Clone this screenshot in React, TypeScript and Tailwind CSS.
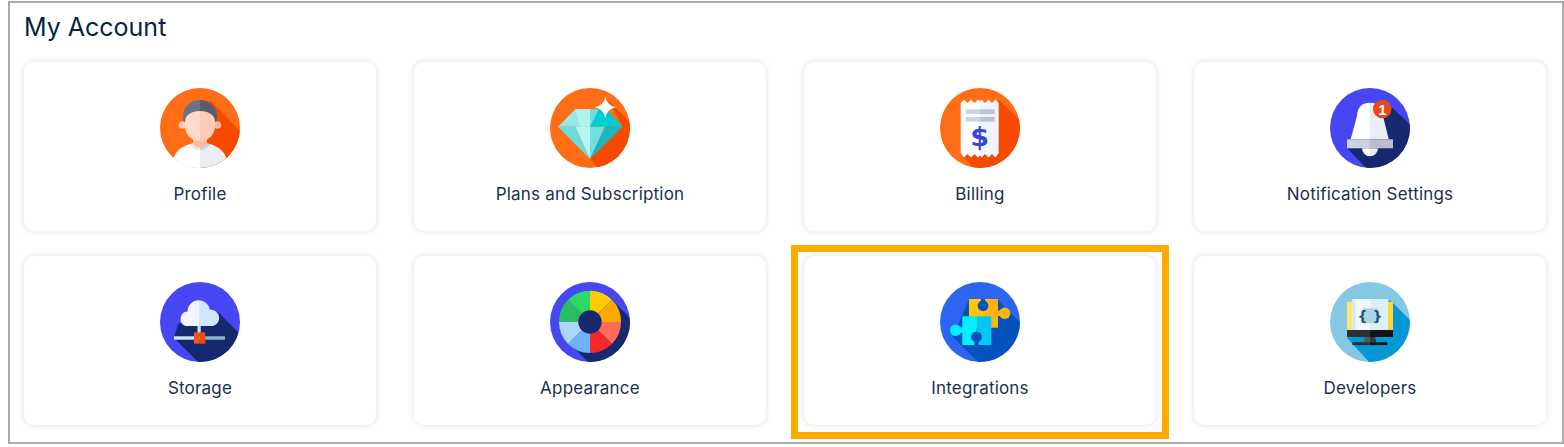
import { ReactNode } from "react";

interface DiscProps {
  id: string;
  bg: string;
  shade: string;
  points: string;
  children: ReactNode;
}

// round flat icon: coloured disc, long shadow, artwork on top
const Disc = ({ id, bg, shade, points, children }: DiscProps) => (
  <svg width="80" height="80" viewBox="0 0 80 80" className="block shrink-0">
    <defs>
      <clipPath id={id}>
        <circle cx="40" cy="40" r="40" />
      </clipPath>
    </defs>
    <g clipPath={`url(#${id})`}>
      <rect width="80" height="80" fill={bg} />
      <polygon points={points} fill={shade} />
      {children}
    </g>
  </svg>
);

const ProfileIcon = () => (
  <Disc id="profile" bg="#FF6D17" shade="#F54A00" points="50,12 82,45 82,82 40,82 40,30">
    <path d="M23 36V29C23 18 31 12 40 12V36Z" fill="#6C7483" />
    <path d="M57 36V29C57 18 49 12 40 12V36Z" fill="#565C6B" />
    <circle cx="22.5" cy="37" r="3.8" fill="#FFC7B6" />
    <circle cx="57.5" cy="37" r="3.8" fill="#FFB7A3" />
    <rect x="33" y="48" width="14" height="16" fill="#FFB8A0" />
    <path d="M40 23C31 23 25 27 25 34V38C25 47 32 53 40 53Z" fill="#FFDACC" />
    <path d="M40 23C49 23 55 27 55 34V38C55 47 48 53 40 53Z" fill="#FFCBB9" />
    <path d="M14 69C17 61 24 58 30 56C33 60 36 62 40 62V82H14Z" fill="#FFFFFF" />
    <path d="M66 69C63 61 56 58 50 56C47 60 44 62 40 62V82H66Z" fill="#E9EDF5" />
    <path d="M30 56C33 60 36 62 40 62V59.5C36 59.5 34 57.5 33 55Z" fill="#E4E8F2" />
    <path d="M50 56C47 60 44 62 40 62V59.5C44 59.5 46 57.5 47 55Z" fill="#CDD3E3" />
    <path d="M14 69L0 80H40V70H14Z" fill="#FFFFFF" />
  </Disc>
);

const PlansIcon = () => (
  <Disc id="plans" bg="#FF6D17" shade="#F54A00" points="58,12 82,36 82,82 50,82 40,71 72.7,38.7">
    <polygon points="25.3,21.3 40,21.3 40,38.7 8,38.7" fill="#97E9E6" />
    <polygon points="25.3,21.3 40,21.3 40,38.7 30,38.7" fill="#B4F2EE" />
    <polygon points="40,21.3 56.3,21.3 72.7,38.7 40,38.7" fill="#00CDD0" />
    <polygon points="40,21.3 49,21.3 40,38.7" fill="#6FE0DC" />
    <polygon points="8,38.7 25.5,38.7 40,71" fill="#6ADCDA" />
    <polygon points="25.5,38.7 40,38.7 40,71" fill="#B6F6F1" />
    <polygon points="40,38.7 55,38.7 40,71" fill="#6FE0DC" />
    <polygon points="55,38.7 72.7,38.7 40,71" fill="#1FB3BE" />
    <path d="M55.3 8.7Q57 17.5 66 19.3Q57 21 55.3 30Q53.5 21 44.7 19.3Q53.5 17.5 55.3 8.7Z" fill="#FFFFFF" />
  </Disc>
);

const BillingIcon = () => (
  <Disc id="billing" bg="#FF6D17" shade="#F54A00" points="58.7,12 82,34 82,82 36,82 20.7,66">
    <polygon points="20.7,15 24,11.5 27.5,15 31,11.5 34.5,15 38,11.5 40,13.5 40,67.5 38,69.5 34.5,66 31,69.5 27.5,66 24,69.5 20.7,65" fill="#FFFFFF" />
    <polygon points="58.7,15 55.5,11.5 52,15 48.5,11.5 45,15 41.5,11.5 40,13.5 40,67.5 41.5,69.5 45,66 48.5,69.5 52,66 55.5,69.5 58.7,65" fill="#F1F4FC" />
    <rect x="25.7" y="21.3" width="14.3" height="4.7" fill="#CDD4E4" />
    <rect x="40" y="21.3" width="14.7" height="4.7" fill="#B9C2D6" />
    <rect x="25.7" y="29" width="14.3" height="4.7" fill="#CDD4E4" />
    <rect x="40" y="29" width="14.7" height="4.7" fill="#B9C2D6" />
    <text x="39.7" y="58" textAnchor="middle" fontSize="27" fontWeight="700" fontFamily="'DejaVu Sans', sans-serif" fill="#3A45D6">$</text>
  </Disc>
);

const BellIcon = () => (
  <Disc id="bell" bg="#4646F2" shade="#16286E" points="56,14 82,38 82,82 38,82 17,60">
    <path d="M40 14.7C31 14.7 27.5 20 27 28L20.7 51.3H40Z" fill="#FFFFFF" />
    <path d="M40 14.7C49 14.7 52.5 20 53 28L58.7 51.3H40Z" fill="#E9EDF5" />
    <path d="M32 60.3A8 8 0 0 0 40 68.3V60.3Z" fill="#FFFFFF" />
    <path d="M48 60.3A8 8 0 0 1 40 68.3V60.3Z" fill="#E9EDF5" />
    <rect x="17" y="51.3" width="23" height="9" fill="#CDD2E0" />
    <rect x="40" y="51.3" width="23" height="9" fill="#B9BDCE" />
    <circle cx="52.3" cy="21" r="9.3" fill="#E8471C" />
    <text x="52.3" y="26.5" textAnchor="middle" fontSize="15" fontWeight="700" fontFamily="'Liberation Sans', sans-serif" fill="#FFFFFF">1</text>
  </Disc>
);

const StorageIcon = () => (
  <Disc id="storage" bg="#4646F2" shade="#16286E" points="58,30 82,54 82,82 40,82 14,56 18,42">
    <path d="M39 18.3A11.5 11.5 0 0 0 27.5 29.5A7.5 7.5 0 0 0 25.5 44H39Z" fill="#F3F5FF" />
    <path d="M39 18.3A11.5 11.5 0 0 1 50 27.8A8.2 8.2 0 0 1 52.5 44H39Z" fill="#D2E7FF" />
    <rect x="37.5" y="44" width="3.2" height="8" fill="#CFE6F9" />
    <rect x="14" y="54.3" width="26" height="3.4" fill="#CFE6F9" />
    <rect x="40" y="54.3" width="25" height="3.4" fill="#8FB5D8" />
    <rect x="34" y="50.3" width="5.7" height="11.4" fill="#F4551B" />
    <rect x="39.7" y="50.3" width="5.6" height="11.4" fill="#E84A14" />
  </Disc>
);

const wheel = [
  { fill: "#FFCC00", d: "M40 40L40 8.7A31 31 0 0 1 61.9 17.8Z" },
  { fill: "#FFA800", d: "M40 40L61.9 17.8A31 31 0 0 1 71 40Z" },
  { fill: "#FF6B57", d: "M40 40L71 40A31 31 0 0 1 61.9 61.9Z" },
  { fill: "#F42A2A", d: "M40 40L61.9 61.9A31 31 0 0 1 40 71Z" },
  { fill: "#6EB1F9", d: "M40 40L40 71A31 31 0 0 1 18.1 61.9Z" },
  { fill: "#ABD4FF", d: "M40 40L18.1 61.9A31 31 0 0 1 9 40Z" },
  { fill: "#28BD60", d: "M40 40L9 40A31 31 0 0 1 18.1 17.8Z" },
  { fill: "#2FD766", d: "M40 40L18.1 17.8A31 31 0 0 1 40 8.7Z" },
];

const AppearanceIcon = () => (
  <Disc id="appearance" bg="#4646F2" shade="#16286E" points="60,16 82,38 82,82 40,82 18,60">
    {wheel.map((s) => (
      <path key={s.fill} d={s.d} fill={s.fill} />
    ))}
    <circle cx="40" cy="40" r="11.7" fill="#16286E" />
  </Disc>
);

const IntegrationsIcon = () => (
  <Disc id="integrations" bg="#2C66F0" shade="#0552BD" points="57,17 82,42 82,82 40,82 13,55 29,17">
    {/* back piece */}
    <rect x="29" y="17" width="14" height="28.7" fill="#FFC800" />
    <rect x="43" y="17" width="15" height="28.7" fill="#FFB30C" />
    <rect x="57" y="28.5" width="4" height="5.5" fill="#FFB30C" />
    <circle cx="64.7" cy="31.3" r="5.7" fill="#FFB30C" />
    <circle cx="43" cy="23.7" r="5.4" fill="#0552BD" />
    <rect x="41" y="17" width="4" height="4" fill="#0552BD" />
    {/* front piece */}
    <rect x="22.3" y="34.3" width="14.4" height="28.7" fill="#00F0FF" />
    <rect x="36.7" y="34.3" width="14.6" height="28.7" fill="#00C8F5" />
    <rect x="19" y="45.5" width="4" height="5.5" fill="#00F0FF" />
    <circle cx="15.7" cy="48.3" r="5.7" fill="#00F0FF" />
    <circle cx="36.5" cy="55" r="5.4" fill="#0552BD" />
    <rect x="34.5" y="58.5" width="4" height="4.5" fill="#0552BD" />
  </Disc>
);

const DevelopersIcon = () => (
  <Disc id="developers" bg="#85C8E6" shade="#0698D5" points="60,18 82,40 82,82 41,82 17,56">
    <rect x="17" y="19.7" width="23" height="28.3" fill="#FFE270" />
    <rect x="40" y="19.7" width="23" height="28.3" fill="#FFD633" />
    <rect x="22.3" y="17" width="17.7" height="31" fill="#F0F8FD" />
    <rect x="40" y="17" width="18" height="31" fill="#DCEFF9" />
    <rect x="22.3" y="19" width="3" height="29" fill="#D2EAF6" />
    <rect x="32.3" y="26.3" width="15.7" height="15" fill="#AED5E6" />
    <text x="40" y="38.5" textAnchor="middle" fontSize="14" fontWeight="700" fontFamily="'DejaVu Sans', sans-serif" fill="#0F5A7C">{"{ }"}</text>
    <rect x="17" y="48" width="23" height="7" fill="#2E2E33" />
    <rect x="40" y="48" width="23" height="7" fill="#151518" />
    <polygon points="35,55 40,55 40,60.3 33.5,60.3" fill="#5A5A60" />
    <polygon points="40,55 45,55 46.5,60.3 40,60.3" fill="#38383D" />
    <rect x="22.3" y="60.3" width="17.7" height="2.8" fill="#2E2E33" />
    <rect x="40" y="60.3" width="17.3" height="2.8" fill="#111114" />
  </Disc>
);

const cards = [
  { label: "Profile", icon: <ProfileIcon /> },
  { label: "Plans and Subscription", icon: <PlansIcon /> },
  { label: "Billing", icon: <BillingIcon /> },
  { label: "Notification Settings", icon: <BellIcon /> },
  { label: "Storage", icon: <StorageIcon /> },
  { label: "Appearance", icon: <AppearanceIcon /> },
  { label: "Integrations", icon: <IntegrationsIcon />, highlight: true },
  { label: "Developers", icon: <DevelopersIcon /> },
];

export default function App() {
  return (
    <div className="w-[1564px] h-[447px] bg-white pt-px pl-2 font-['Inter',sans-serif]">
      <div className="w-[1556px] h-[443px] border-2 border-[#aaaaaa] pl-[14px] pt-[6px]">
        <h1 className="h-[40px] text-[25px] leading-[36px] text-[#0a1f44]">My Account</h1>
        <div className="mt-[13px] grid grid-cols-[repeat(4,352px)] gap-x-[38px] gap-y-[25px]">
          {cards.map((card) => (
            <div
              key={card.label}
              className="relative h-[169px] rounded-[10px] bg-white pt-[26px] flex flex-col items-center shadow-[0_0_6px_rgba(0,0,0,0.13)]"
            >
              {card.icon}
              <span className="mt-[15px] text-[17px] tracking-[0.2px] leading-[22px] text-[#1c2f50]">{card.label}</span>
              {card.highlight && (
                <div className="absolute -left-[13px] -top-[11px] w-[378px] h-[194px] border-[7px] border-[#ffab00]" />
              )}
            </div>
          ))}
        </div>
      </div>
    </div>
  );
}
